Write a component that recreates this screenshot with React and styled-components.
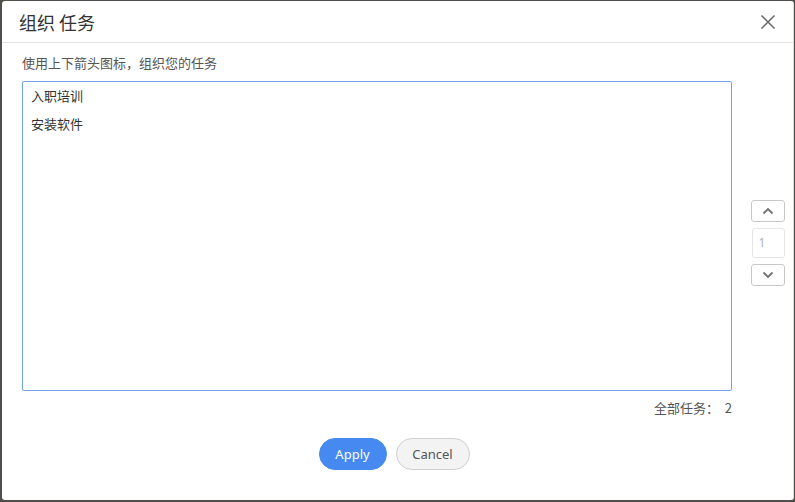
import React, { useState } from "react";
import styled, { createGlobalStyle } from "styled-components";

const GlobalStyle = createGlobalStyle`
  html, body {
    margin: 0;
    padding: 0;
    background: #4f4e4a;
    font-family: "Noto Sans", "Noto Sans CJK SC", sans-serif;
  }
  * { box-sizing: border-box; }
`;

const Page = styled.div`
  width: 795px;
  height: 502px;
  padding: 1px 1px 2px 2px;
`;

const Dialog = styled.div`
  width: 100%;
  height: 100%;
  background: #fff;
  border-radius: 3px;
  border-right: 1px solid #dcdcdc;
  display: flex;
  flex-direction: column;
`;

const Header = styled.div`
  height: 42px;
  border-bottom: 1px solid #e3e3e3;
  display: flex;
  align-items: center;
  justify-content: space-between;
  padding: 0 16px 0 17px;
`;

const Title = styled.h2`
  margin: 0;
  font-size: 18px;
  font-weight: 400;
  color: #333;
  font-family: "Noto Sans CJK SC", sans-serif;
  line-height: 1;
`;

const CloseButton = styled.button`
  border: none;
  background: none;
  padding: 0;
  width: 18px;
  height: 18px;
  display: flex;
  align-items: center;
  justify-content: center;
  cursor: pointer;
`;

const Body = styled.div`
  flex: 1;
  padding: 11px 0 0 20px;
  display: flex;
  flex-direction: column;
`;

const Hint = styled.div`
  font-size: 13px;
  color: #555;
  font-family: "Noto Sans CJK SC", sans-serif;
  line-height: 18px;
  margin-bottom: 9px;
`;

const Row = styled.div`
  display: flex;
  align-items: center;
`;

const TaskList = styled.ul`
  list-style: none;
  margin: 0;
  flex-shrink: 0;
  width: 710px;
  height: 310px;
  border: 1px solid #74a2e6;
  border-radius: 2px;
  padding: 5px 8px;
`;

const TaskItem = styled.li`
  font-size: 13px;
  color: #333;
  font-family: "Noto Sans CJK SC", sans-serif;
  line-height: 18px;
  margin-bottom: 10px;
  cursor: pointer;
  background: ${(p) => (p.$selected ? "#eef4fd" : "transparent")};
`;

const Spinner = styled.div`
  margin-left: 19px;
  flex-shrink: 0;
  display: flex;
  flex-direction: column;
  gap: 6px;
  align-items: center;
  margin-top: 13px;
`;

const ArrowButton = styled.button`
  width: 34px;
  height: 22px;
  border: 1px solid #c8c8c8;
  border-radius: 3px;
  background: #fff;
  display: flex;
  align-items: center;
  justify-content: center;
  padding: 0;
  cursor: pointer;
`;

const IndexBox = styled.div`
  width: 33px;
  height: 30px;
  border: 1px solid #e6e6e6;
  border-radius: 3px;
  font-size: 12px;
  color: #b0b0b0;
  padding: 0 6px;
  display: flex;
  align-items: center;
  font-family: "Noto Sans", sans-serif;
`;

const Total = styled.div`
  width: 710px;
  text-align: right;
  font-size: 13px;
  color: #555;
  font-family: "Noto Sans CJK SC", sans-serif;
  margin-top: 8px;
  line-height: 18px;
`;

const Footer = styled.div`
  display: flex;
  justify-content: center;
  gap: 9px;
  margin-top: 21px;
  padding-right: 27px;
`;

const Button = styled.button`
  height: 32px;
  border-radius: 16px;
  font-size: 13px;
  font-family: "Noto Sans", sans-serif;
  padding: 0;
  width: ${(p) => (p.$primary ? "68px" : "74px")};
  background: ${(p) => (p.$primary ? "#4689f0" : "#f3f3f3")};
  color: ${(p) => (p.$primary ? "#fff" : "#555")};
  border: 1px solid ${(p) => (p.$primary ? "#4689f0" : "#d0d0d0")};
  cursor: pointer;
`;

const Chevron = ({ up }) => (
  <svg width="12" height="8" viewBox="0 0 12 8">
    <path
      d={up ? "M1.5 6.5 L6 2 L10.5 6.5" : "M1.5 1.5 L6 6 L10.5 1.5"}
      fill="none"
      stroke="#707070"
      strokeWidth="1.8"
    />
  </svg>
);

export default function App() {
  const [tasks] = useState(["入职培训", "安装软件"]);
  const [index] = useState(1);

  return (
    <Page>
      <GlobalStyle />
      <Dialog>
        <Header>
          <Title>组织 任务</Title>
          <CloseButton aria-label="close">
            <svg width="16" height="16" viewBox="0 0 16 16">
              <path d="M1.5 1.5 L14.5 14.5 M14.5 1.5 L1.5 14.5" stroke="#666" strokeWidth="1.5" />
            </svg>
          </CloseButton>
        </Header>
        <Body>
          <Hint>使用上下箭头图标，组织您的任务</Hint>
          <Row>
            <TaskList>
              {tasks.map((t) => (
                <TaskItem key={t}>{t}</TaskItem>
              ))}
            </TaskList>
            <Spinner>
              <ArrowButton>
                <Chevron up />
              </ArrowButton>
              <IndexBox>{index}</IndexBox>
              <ArrowButton>
                <Chevron />
              </ArrowButton>
            </Spinner>
          </Row>
          <Total>全部任务：&nbsp;&nbsp;{tasks.length}</Total>
          <Footer>
            <Button $primary>Apply</Button>
            <Button>Cancel</Button>
          </Footer>
        </Body>
      </Dialog>
    </Page>
  );
}
